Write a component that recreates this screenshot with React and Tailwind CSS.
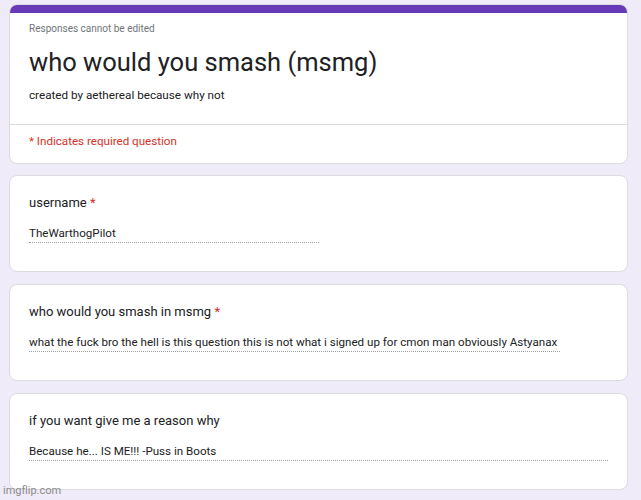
import React from 'react';

const QuestionCard = ({ label, required, answer, lineWidth }) => (
  <div className="bg-white rounded-lg border border-[#dadce0] h-[97px] pl-[19px] pt-[18px]">
    <div className="text-[13px] leading-[18px] text-[#202124]">
      {label}
      {required && <span className="text-[#d93025]"> *</span>}
    </div>
    <div
      className="mt-[13px] text-[11.6px] leading-[16px] text-[#202124] pb-[1px] border-b border-dotted border-[#9aa0a6]"
      style={{ width: lineWidth }}
    >
      {answer}
    </div>
  </div>
);

const App = () => {
  return (
    <div className="w-[641px] h-[500px] bg-[#efebf8] relative overflow-hidden" style={{ fontFamily: 'Roboto, "Liberation Sans", sans-serif' }}>
      <div className="ml-[9px] w-[619px] pt-[4px] flex flex-col gap-[11px]">
        <div className="bg-white rounded-lg border border-[#dadce0] overflow-hidden h-[160px]">
          <div className="h-[8px] bg-[#673ab7]" />
          <div className="pl-[19px] pt-[10px]">
            <div className="text-[10px] leading-[12px] text-[#70757a]">Responses cannot be edited</div>
            <div className="mt-[10px] text-[25.5px] leading-[34px] text-[#202124]">who would you smash (msmg)</div>
            <div className="mt-[8px] text-[11.7px] leading-[16px] text-[#202124]">created by aethereal because why not</div>
          </div>
          <div className="mt-[21px] border-t border-[#dadce0]" />
          <div className="pl-[19px] pt-[8px] text-[11.6px] leading-[16px] text-[#d93025]">* Indicates required question</div>
        </div>
        <QuestionCard label="username" required answer="TheWarthogPilot" lineWidth={290} />
        <div className="mt-px">
          <QuestionCard
            label="who would you smash in msmg"
            required
            answer="what the fuck bro the hell is this question this is not what i signed up for cmon man obviously Astyanax"
            lineWidth={531}
          />
        </div>
        <div className="mt-px">
          <QuestionCard label="if you want give me a reason why" answer="Because he... IS ME!!! -Puss in Boots" lineWidth={579} />
        </div>
      </div>
      <div className="absolute left-[3px] bottom-[2px] text-[11px] leading-[14px] text-[#8a8a8a]">imgflip.com</div>
    </div>
  );
};

export default App;
